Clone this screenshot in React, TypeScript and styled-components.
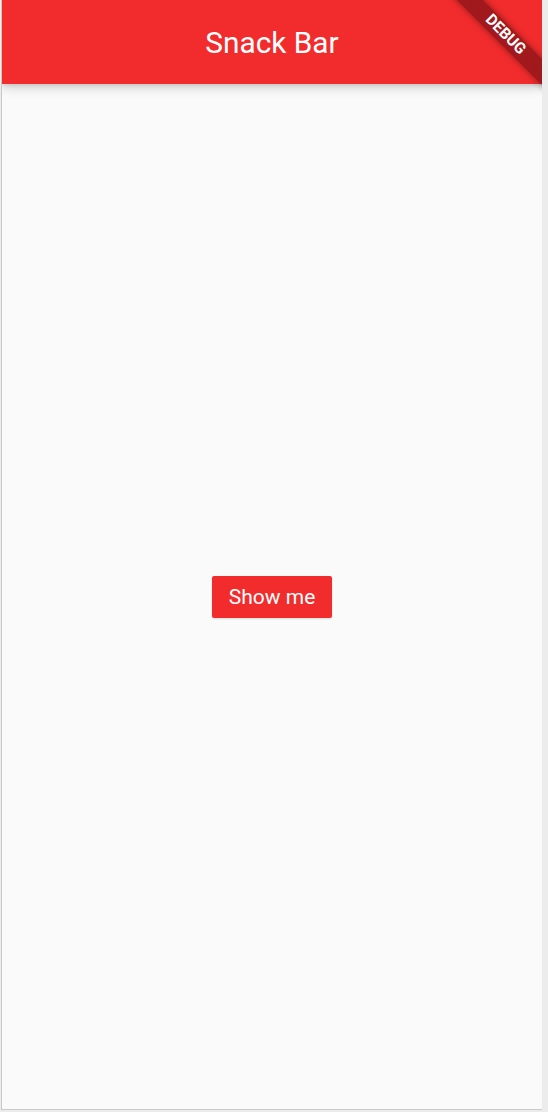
import React from "react";
import styled, { createGlobalStyle } from "styled-components";

const GlobalStyle = createGlobalStyle`
  html, body {
    margin: 0;
    padding: 0;
    background: #ececec;
    font-family: Roboto, "Liberation Sans", sans-serif;
  }
  #root {
    width: 548px;
    height: 1112px;
  }
`;

const Frame = styled.div`
  width: 548px;
  height: 1112px;
  box-sizing: border-box;
  padding-left: 1px;
  background: #ececec;
`;

const Device = styled.div`
  width: 541px;
  height: 1110px;
  box-sizing: border-box;
  border-left: 1px solid #c9c9c9;
  border-bottom: 1px solid #c9c9c9;
  display: flex;
`;

const Screen = styled.div`
  position: relative;
  width: 540px;
  height: 1109px;
  overflow: hidden;
  display: flex;
  flex-direction: column;
  background: #fafafa;
`;

const AppBar = styled.header`
  height: 84px;
  flex: 0 0 84px;
  background: #f22c2d;
  display: flex;
  align-items: center;
  justify-content: center;
  box-shadow: 0 4px 10px rgba(0, 0, 0, 0.16), 0 1px 4px rgba(0, 0, 0, 0.12);
  position: relative;
  z-index: 1;
`;

const Title = styled.h1`
  margin: 0;
  font-family: Roboto, "Liberation Sans", sans-serif;
  font-weight: 400;
  font-size: 29.8px;
  color: #ffffff;
  line-height: 1;
  padding-top: 2px;
`;

const Body = styled.main`
  flex: 1;
  display: flex;
  align-items: center;
  justify-content: center;
  padding-top: 1px;
`;

const Button = styled.button`
  width: 120px;
  height: 42px;
  border: none;
  border-radius: 2px;
  background: #f22c2d;
  color: #ffffff;
  font-family: Roboto, "Liberation Sans", sans-serif;
  font-size: 21px;
  font-weight: 400;
  padding: 0;
  cursor: pointer;
  box-shadow: 0 1px 2px rgba(0, 0, 0, 0.12);
`;

const Banner = styled.div`
  position: absolute;
  left: 423px;
  top: 26px;
  width: 160px;
  height: 18px;
  transform: rotate(45deg);
  background: #a1181d;
  box-shadow: 0 0 7px rgba(0, 0, 0, 0.45);
  display: flex;
  align-items: center;
  justify-content: center;
  z-index: 2;
`;

const BannerText = styled.span`
  font-family: Roboto, "Liberation Sans", sans-serif;
  font-weight: 700;
  font-size: 15.5px;
  line-height: 1;
  color: #ffffff;
`;

export default function App() {
  return (
    <>
      <GlobalStyle />
      <Frame>
        <Device>
          <Screen>
            <AppBar>
              <Title>Snack Bar</Title>
            </AppBar>
            <Body>
              <Button>Show me</Button>
            </Body>
            <Banner>
              <BannerText>DEBUG</BannerText>
            </Banner>
          </Screen>
        </Device>
      </Frame>
    </>
  );
}
